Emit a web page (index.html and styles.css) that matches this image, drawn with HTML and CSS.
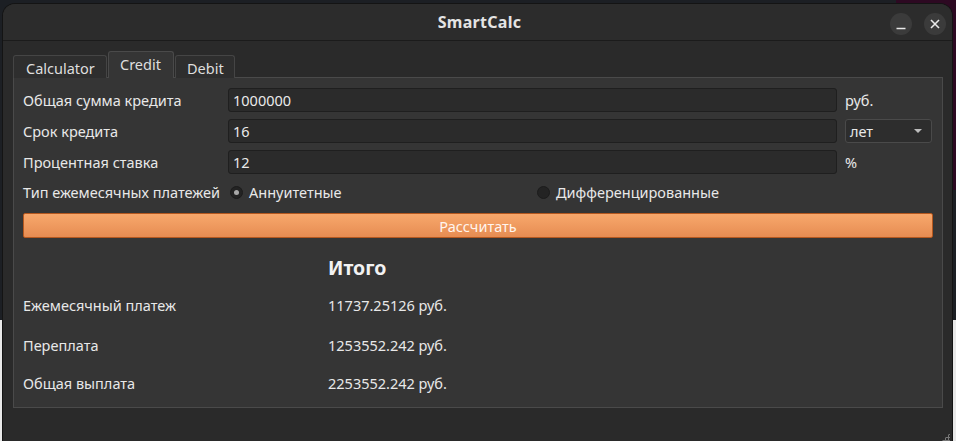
FILE: index.html
```html
<!DOCTYPE html>
<html lang="ru">
<head>
<meta charset="utf-8">
<title>SmartCalc</title>
<link rel="stylesheet" href="styles.css">
</head>
<body>
<div class="desktop">
  <div class="bg-term"></div>
  <div class="window">
    <div class="titlebar">
      <div class="title">SmartCalc</div>
      <div class="controls">
        <div class="wbtn"><svg width="22" height="22" viewBox="0 0 22 22"><line x1="6.5" y1="15.5" x2="15.5" y2="15.5" stroke="#e8e8e8" stroke-width="1.6"/></svg></div>
        <div class="wbtn"><svg width="22" height="22" viewBox="0 0 22 22"><path d="M7 7 L15 15 M15 7 L7 15" stroke="#e8e8e8" stroke-width="1.6" fill="none"/></svg></div>
      </div>
    </div>
    <div class="body">
      <div class="tabs">
        <div class="tab">Calculator</div>
        <div class="tab active">Credit</div>
        <div class="tab">Debit</div>
      </div>
      <div class="pane">
        <div class="form">
          <div class="label">Общая сумма кредита</div>
          <div class="input">1000000</div>
          <div class="suffix">руб.</div>

          <div class="label">Срок кредита</div>
          <div class="input">16</div>
          <div class="combo"><span>лет</span><svg width="10" height="6" viewBox="0 0 10 6"><path d="M1 1 L9 1 L5 5 Z" fill="#bdbdbd"/></svg></div>

          <div class="label">Процентная ставка</div>
          <div class="input">12</div>
          <div class="suffix">%</div>
        </div>
        <div class="radios">
          <div class="label">Тип ежемесячных платежей</div>
          <div class="radio-group">
            <div class="radio"><span class="dot checked"></span>Аннуитетные</div>
            <div class="radio"><span class="dot"></span>Дифференцированные</div>
          </div>
        </div>
        <div class="button">Рассчитать</div>
        <div class="results">
          <div></div>
          <div class="total">Итого</div>
          <div class="rlabel">Ежемесячный платеж</div>
          <div class="rvalue">11737.25126 руб.</div>
          <div class="rlabel">Переплата</div>
          <div class="rvalue">1253552.242 руб.</div>
          <div class="rlabel">Общая выплата</div>
          <div class="rvalue">2253552.242 руб.</div>
        </div>
      </div>
      <div class="grip"></div>
    </div>
  </div>
</div>
</body>
</html>
```

FILE: styles.css
```css
* { box-sizing: border-box; }
html, body { margin: 0; padding: 0; }
body {
  width: 956px;
  height: 441px;
  overflow: hidden;
  background: #e9e9e9;
  font-family: "Noto Sans", "Open Sans", sans-serif;
  font-size: 14.5px;
  color: #e8e8e8;
}
.desktop {
  position: relative;
  width: 956px;
  height: 441px;
  background: linear-gradient(to bottom, #1c1f24 0, #1c1f24 320px, #e9e9e9 320px);
}
.bg-term {
  position: absolute;
  right: 0;
  top: 0;
  width: 60px;
  height: 190px;
  background: #2d0922;
}
.window {
  position: absolute;
  left: 3px;
  top: 4px;
  width: 949px;
  height: 445px;
  border-radius: 12px 12px 0 0;
  background: #2a2a2a;
  display: flex;
  flex-direction: column;
  overflow: hidden;
  box-shadow: 0 0 0 1px #141414;
}
.titlebar {
  height: 37px;
  flex: none;
  background: #2c2c2c;
  border-bottom: 1px solid #1b1b1b;
  display: flex;
  align-items: center;
  justify-content: center;
  position: relative;
}
.title {
  font-weight: bold;
  font-size: 16px;
  letter-spacing: 0.3px;
  color: #e4e4e4;
  margin-left: 4px;
}
.controls {
  position: absolute;
  right: 6px;
  top: 9px;
  display: flex;
  gap: 12px;
}
.wbtn {
  width: 22px;
  height: 22px;
  border-radius: 50%;
  background: #3b3b3b;
  display: flex;
}
.body {
  flex: 1;
  padding: 11px 9px 0 10px;
  display: flex;
  flex-direction: column;
  position: relative;
}
.tabs {
  display: flex;
  align-items: flex-end;
  height: 26px;
  position: relative;
  z-index: 1;
  margin-bottom: -1px;
}
.tab {
  height: 23px;
  padding: 1px 0 0 12px;
  display: flex;
  align-items: center;
  background: #2e2e2e;
  border: 1px solid #454545;
  border-bottom: none;
  border-radius: 3px 3px 0 0;
  color: #dedede;
  margin-right: 1px;
}
.tab:first-child { width: 94px; }
.tab.active {
  height: 27px;
  background: #353535;
  border-color: #4a4a4a;
  width: 66px;
  padding: 0 0 3px 11px;
}
.tab:last-child { width: 60px; padding-left: 11px; }
.pane {
  height: 331px;
  background: #353535;
  border: 1px solid #4a4a4a;
  padding: 10px 10px 0 9px;
}
.form {
  display: grid;
  grid-template-columns: 197px 1fr 87px;
  column-gap: 8px;
  row-gap: 7px;
  align-items: center;
}
.label { color: #e8e8e8; }
.input {
  height: 24px;
  background: #2b2b2b;
  border: 1px solid #1f1f1f;
  border-radius: 3px;
  padding: 0 4px;
  display: flex;
  align-items: center;
  color: #eaeaea;
}
.suffix { color: #e8e8e8; }
.combo {
  height: 24px;
  background: #2d2d2d;
  border: 1px solid #4a4a4a;
  border-radius: 3px;
  padding: 0 8px 0 4px;
  display: flex;
  align-items: center;
  justify-content: space-between;
}
.radios {
  display: flex;
  align-items: center;
  height: 22px;
  margin-top: 7px;
}
.radios .label { width: 207px; }
.radio-group {
  flex: 1;
  display: grid;
  grid-template-columns: 307px 1fr;
}
.radio {
  display: flex;
  align-items: center;
  gap: 6px;
}
.dot {
  width: 13px;
  height: 13px;
  border-radius: 50%;
  background: #232323;
  border: 1px solid #1c1c1c;
  display: inline-flex;
  align-items: center;
  justify-content: center;
}
.dot.checked::after {
  content: "";
  width: 5px;
  height: 5px;
  border-radius: 50%;
  background: #a8a8a8;
}
.button {
  margin-top: 10px;
  width: 910px;
  height: 25px;
  background: linear-gradient(to bottom, #f8a86c, #e68c52);
  border: 1px solid #b5581f;
  border-radius: 2px;
  color: #fff5ee;
  display: flex;
  align-items: center;
  justify-content: center;
}
.results {
  margin-top: 11px;
  display: grid;
  grid-template-columns: 305px 1fr;
  grid-template-rows: 36px 40px 40px 36px;
  align-items: center;
}
.total {
  font-weight: bold;
  font-size: 19.5px;
  color: #f2f2f2;
}
.rlabel, .rvalue { color: #e8e8e8; }
.grip {
  position: absolute;
  right: 2px;
  bottom: 4px;
  width: 12px;
  height: 12px;
  background-image: radial-gradient(circle, #777 1px, transparent 1.2px);
  background-size: 3px 3px;
  clip-path: polygon(100% 0, 100% 100%, 0 100%);
}
```
